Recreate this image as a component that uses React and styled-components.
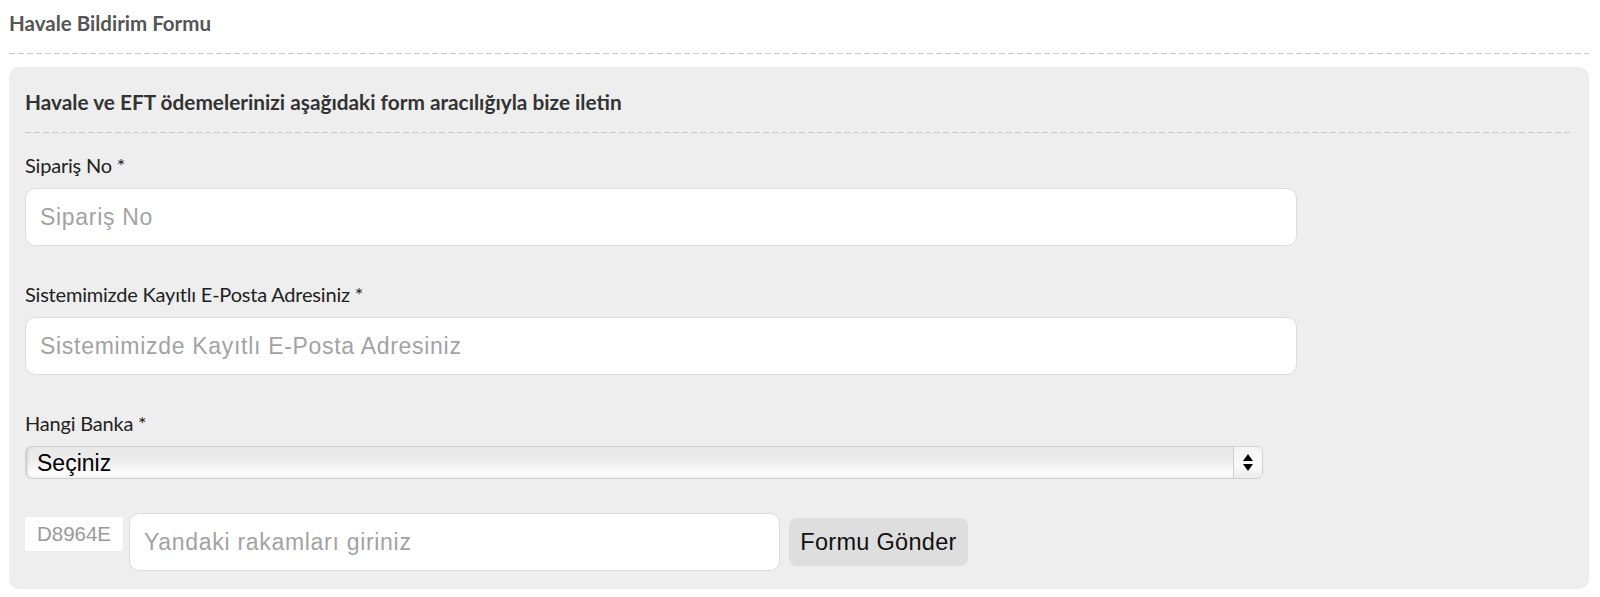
import styled, { createGlobalStyle } from 'styled-components';

const GlobalStyle = createGlobalStyle`
	body {
		margin: 0;
		background: #fff;
		font-family: 'Lato', 'Liberation Sans', sans-serif;
	}
`;

const Page = styled.div`
	padding: 0 11px 0 9px;
`;

const PageTitle = styled.h2`
	margin: 0;
	padding-top: 11px;
	font-size: 20.5px;
	line-height: 24px;
	font-weight: 700;
	color: #555;
`;

const Dashed = styled.div`
	height: 1px;
	margin-top: ${({ $mt }) => $mt || 0}px;
	background: repeating-linear-gradient(
		to right,
		#c8c8c8 0 6px,
		transparent 6px 9px
	);
`;

const Panel = styled.form`
	margin-top: 13px;
	background: #eee;
	border-radius: 10px;
	padding: 24px 17px 18px 16px;
`;

const Subtitle = styled.h3`
	margin: 0;
	font-size: 20.8px;
	line-height: 22px;
	font-weight: 700;
	color: #333;
`;

const FieldGroup = styled.div`
	margin-top: ${({ $first }) => ($first ? 21 : 37)}px;
`;

const Label = styled.label`
	display: block;
	font-size: 20px;
	line-height: 22px;
	color: #222;
	letter-spacing: -0.2px;
	margin-bottom: 12px;
`;

const Input = styled.input`
	box-sizing: border-box;
	display: block;
	width: ${({ $width }) => $width}px;
	height: 58px;
	padding: 0 14px;
	border: 1px solid #dcdcdc;
	border-radius: 10px;
	background: #fff;
	font-family: 'Liberation Sans', Arial, sans-serif;
	font-size: 23px;
	letter-spacing: 0.7px;
	color: #333;
	outline: none;

	&::placeholder {
		color: #a3a3a3;
	}
`;

const SelectWrap = styled.div`
	position: relative;
	width: 1238px;
	height: 33px;
`;

const Select = styled.select`
	appearance: none;
	box-sizing: border-box;
	width: 100%;
	height: 100%;
	padding: 0 40px 0 11px;
	border: 1px solid #d2d2d2;
	border-radius: 6px;
	background: linear-gradient(
		to bottom,
		#e9e9e9 0%,
		#ececec 40%,
		#fdfdfd 85%,
		#f4f4f4 100%
	);
	box-shadow: inset 3px 0 3px -2px #c4c4c4;
	font-family: 'Liberation Sans', Arial, sans-serif;
	font-size: 23px;
	color: #000;
	outline: none;
`;

const SelectArrow = styled.span`
	position: absolute;
	top: 1px;
	right: 1px;
	bottom: 1px;
	width: 28px;
	border-left: 1px solid #cfcfcf;
	border-radius: 0 5px 5px 0;
	background: linear-gradient(to bottom, #f3f3f3, #fafafa 60%, #ececec);
	display: flex;
	align-items: center;
	justify-content: center;
	pointer-events: none;
`;

const CaptchaRow = styled.div`
	display: flex;
	align-items: center;
	margin-top: 34px;
`;

const Captcha = styled.span`
	align-self: flex-start;
	margin-top: 4px;
	width: 98px;
	height: 34px;
	background: #fff;
	display: flex;
	align-items: center;
	justify-content: center;
	font-family: 'Liberation Sans', Arial, sans-serif;
	font-size: 20.5px;
	color: #999;
	margin-right: 6px;
`;

const SubmitButton = styled.button`
	margin-left: 9px;
	width: 179px;
	height: 48px;
	border: none;
	border-radius: 8px;
	background: #dedede;
	font-family: 'Liberation Sans', Arial, sans-serif;
	font-size: 23.5px;
	letter-spacing: 0.3px;
	color: #111;
	cursor: pointer;
`;

const ArrowIcon = () => (
	<svg width="10" height="17" viewBox="0 0 10 17">
		<path d="M5 0 L10 7 L0 7 Z" fill="#000" />
		<path d="M0 10 L10 10 L5 17 Z" fill="#000" />
	</svg>
);

export default function App() {
	return (
		<Page>
			<GlobalStyle />
			<PageTitle>Havale Bildirim Formu</PageTitle>
			<Dashed $mt={18} />
			<Panel onSubmit={(e) => e.preventDefault()}>
				<Subtitle>
					Havale ve EFT ödemelerinizi aşağıdaki form aracılığıyla bize iletin
				</Subtitle>
				<Dashed $mt={19} />
				<FieldGroup $first>
					<Label>Sipariş No *</Label>
					<Input $width={1272} type="text" placeholder="Sipariş No" />
				</FieldGroup>
				<FieldGroup>
					<Label>Sistemimizde Kayıtlı E-Posta Adresiniz *</Label>
					<Input
						$width={1272}
						type="text"
						placeholder="Sistemimizde Kayıtlı E-Posta Adresiniz"
					/>
				</FieldGroup>
				<FieldGroup>
					<Label>Hangi Banka *</Label>
					<SelectWrap>
						<Select defaultValue="">
							<option value="">Seçiniz</option>
						</Select>
						<SelectArrow>
							<ArrowIcon />
						</SelectArrow>
					</SelectWrap>
				</FieldGroup>
				<CaptchaRow>
					<Captcha>D8964E</Captcha>
					<Input
						$width={651}
						type="text"
						placeholder="Yandaki rakamları giriniz"
					/>
					<SubmitButton type="submit">Formu Gönder</SubmitButton>
				</CaptchaRow>
			</Panel>
		</Page>
	);
}
